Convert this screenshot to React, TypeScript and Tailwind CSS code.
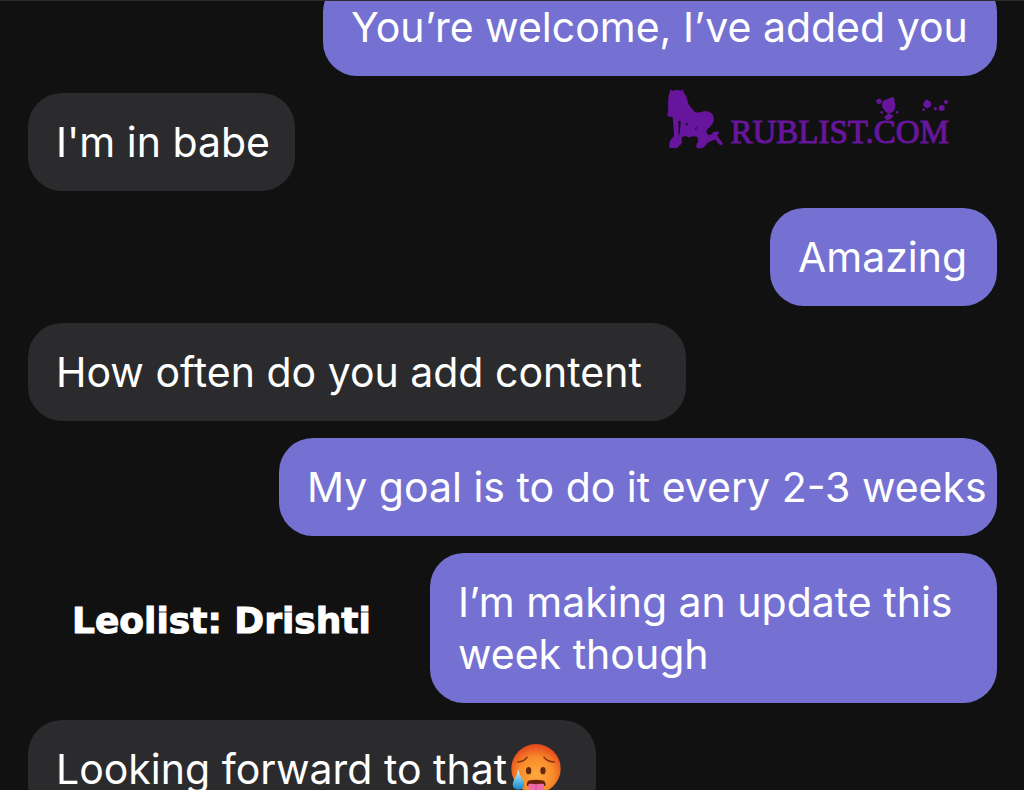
import React from "react";

type Message = {
  from: "me" | "them";
  text: string;
  width: string;
  emoji?: boolean;
};

const messages: Message[] = [
  { from: "me", text: "You’re welcome, I’ve added you", width: "w-[674px]" },
  { from: "them", text: "I'm in babe", width: "w-[267px]" },
  { from: "me", text: "Amazing", width: "w-[227px]" },
  { from: "them", text: "How often do you add content", width: "w-[658px]" },
  { from: "me", text: "My goal is to do it every 2-3 weeks", width: "w-[718px]" },
  { from: "me", text: "I’m making an update this week though", width: "w-[567px]" },
  { from: "them", text: "Looking forward to that", width: "w-[568px]", emoji: true },
];

function HotFace() {
  return (
    <svg viewBox="0 0 150 150" className="ml-1 size-[50px] shrink-0" role="img" aria-label="Hot face">
      <defs>
        <radialGradient id="skin" cx="50%" cy="62%" r="60%">
          <stop offset="0" stopColor="#fdab3c" />
          <stop offset="0.6" stopColor="#f98a2b" />
          <stop offset="1" stopColor="#e5491c" />
        </radialGradient>
        <linearGradient id="drop" x1="0" y1="0" x2="0" y2="1">
          <stop offset="0" stopColor="#d9f3fc" />
          <stop offset="0.55" stopColor="#5fbdea" />
          <stop offset="1" stopColor="#1683c5" />
        </linearGradient>
      </defs>
      <circle cx="75" cy="74" r="74" fill="url(#skin)" />
      <g fill="none" stroke="#8b3510" strokeWidth="5" strokeLinecap="round">
        <path d="M20 54Q38 54 48 40" />
        <path d="M99 40Q110 54 130 54" />
      </g>
      <ellipse cx="53" cy="80" rx="8" ry="11" fill="#64280d" />
      <ellipse cx="96" cy="80" rx="8" ry="11" fill="#64280d" />
      <path d="M48 126Q46 110 58 109Q75 106 93 109Q106 111 103 126Z" fill="#68200f" />
      <path d="M52 120Q62 118 75 121Q88 118 99 120L98 142Q92 150 75 150Q57 150 54 142Z" fill="#ee6baa" />
      <path d="M75 122V140" stroke="#d34990" strokeWidth="3" />
      <path d="M22 76Q26 94 34 106Q45 124 34 133Q21 142 9 132Q1 122 10 106Q18 94 22 76Z" fill="url(#drop)" />
    </svg>
  );
}

function Bubble({ message }: { message: Message }) {
  const mine = message.from === "me";
  return (
    <li
      className={`${message.width} max-w-full rounded-[34px] py-[23px] pr-1 pl-7 ${
        mine ? "self-end bg-[#7571d3]" : "self-start bg-[#2b2b2d]"
      }`}
    >
      <p className={message.emoji ? "flex items-center whitespace-nowrap" : ""}>
        {message.text}
        {message.emoji && <HotFace />}
      </p>
    </li>
  );
}

function SiteMark() {
  return (
    <div className="absolute top-[86px] right-[75px] flex items-end gap-[6px] text-[#67159c]">
      <svg viewBox="30 20 180 190" className="h-[63px] w-[60px]" fill="currentColor" aria-hidden="true">
        <path
          fillRule="evenodd"
          d="M46 27L51 31Q65 27 80 31L84 26L86 38Q95 45 97 61Q100 76 109 83L120 96Q134 98 143 94Q158 90 168 98Q178 107 177 122Q174 134 163 142Q153 149 155 157Q160 168 168 164Q174 154 185 154Q194 155 193 160L186 165Q190 174 199 183Q208 192 199 196Q192 195 182 178Q171 181 158 188Q150 202 138 205Q126 206 123 200Q123 193 129 185Q132 177 126 171Q116 165 103 172Q91 166 82 170Q77 175 81 184Q80 194 70 198L68 204H44Q40 199 43 191Q43 182 51 174L57 168L53 111L38 108Q35 103 38 96Q40 87 39 74Q37 57 42 41ZM70 122L71 167L74 160L77 123ZM92 132L91 137L98 133L97 127ZM119 151L125 145L128 138L121 145Z"
        />
      </svg>
      <span className="font-['Liberation_Serif',serif] text-[33px] leading-[36px] [-webkit-text-stroke:1px_#67159c]">
        RUBLIST.COM
      </span>
      <svg viewBox="228 48 222 90" className="absolute top-[9px] right-0 h-[30px] w-[74px]" fill="currentColor" aria-hidden="true">
        <circle cx="240" cy="64" r="8" />
        <path d="M250 70Q253 58 267 57Q275 50 285 52L287 67Q292 80 285 92Q275 104 260 96Q255 88 249 82Z" />
        <circle cx="294" cy="97" r="4" />
        <circle cx="248" cy="97" r="4" />
        <path d="M267 98Q266 105 255 112L263 120Q277 119 284 107Z" />
        <path d="M377 63Q383 55 389 62Q397 64 396 72Q398 80 391 81Q386 88 379 82Q371 79 373 72Q374 68 377 63Z" />
        <circle cx="374" cy="89" r="4" />
        <circle cx="409" cy="86" r="5" />
        <circle cx="428" cy="84" r="9" />
        <circle cx="441" cy="66" r="6" />
      </svg>
    </div>
  );
}

export default function App() {
  return (
    <main className="relative h-screen overflow-hidden border-t border-[#2c2c2e] bg-[#111111] font-['Inter',sans-serif] text-[41px] leading-[52px] text-white">
      <ol className="-mt-[23px] flex flex-col gap-[17px] pr-[27px] pl-7" aria-label="Messages">
        {messages.map((message) => (
          <Bubble key={message.text} message={message} />
        ))}
      </ol>
      <SiteMark />
      <p className="absolute top-[596px] left-[72px] font-['DejaVu_Sans',sans-serif] text-[36px] leading-[48px] font-bold [-webkit-text-stroke:1px_white]">
        Leolist: Drishti
      </p>
    </main>
  );
}
